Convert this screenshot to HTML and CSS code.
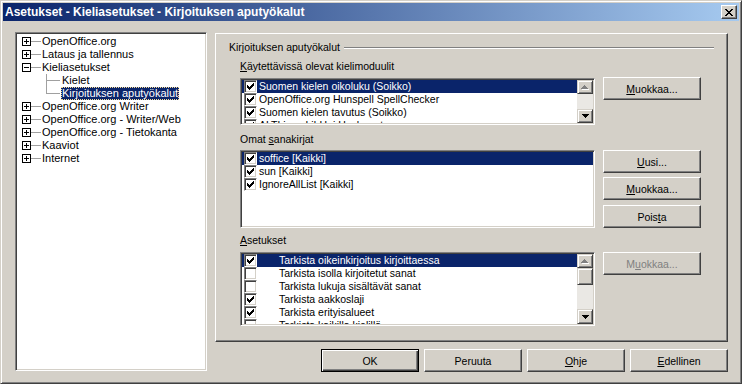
FILE: index.html
```html
<!DOCTYPE html>
<html>
<head>
    <meta charset="utf-8">
    <link rel="stylesheet" href="styles.css">
    <title>Asetukset - Kieliasetukset - Kirjoituksen aputyökalut</title>
</head>
<body>
<div class="window">
    <div class="titlebar">
        <span class="title">Asetukset - Kieliasetukset - Kirjoituksen aputyökalut</span>
        <span class="close-btn">
            <svg width="8" height="7" viewBox="0 0 8 7"><path d="M0 0h2v1h-2zM6 0h2v1h-2zM1 1h2v1h-2zM5 1h2v1h-2zM2 2h4v1h-4zM3 3h2v1h-2zM2 4h4v1h-4zM1 5h2v1h-2zM5 5h2v1h-2zM0 6h2v1h-2zM6 6h2v1h-2z"/></svg>
        </span>
    </div>

    <div class="dialog">
        <!-- options tree -->
        <div class="tree">
            <div class="node"><svg class="exp" width="9" height="9"><path d="M0.5 0.5h8v8h-8z" fill="#fff" stroke="#000"/><path d="M2 4.5h5M4.5 2v5" stroke="#000"/></svg><span class="stem"></span><span class="label">OpenOffice.org</span></div>
            <div class="node"><svg class="exp" width="9" height="9"><path d="M0.5 0.5h8v8h-8z" fill="#fff" stroke="#000"/><path d="M2 4.5h5M4.5 2v5" stroke="#000"/></svg><span class="stem"></span><span class="label">Lataus ja tallennus</span></div>
            <div class="node"><svg class="exp" width="9" height="9"><path d="M0.5 0.5h8v8h-8z" fill="#fff" stroke="#000"/><path d="M2 4.5h5" stroke="#000"/></svg><span class="stem"></span><span class="label">Kieliasetukset</span></div>
            <div class="kids">
                <div class="leaf"><span class="label">Kielet</span></div>
                <div class="leaf"><span class="label selected">Kirjoituksen aputyökalut</span></div>
            </div>
            <div class="node"><svg class="exp" width="9" height="9"><path d="M0.5 0.5h8v8h-8z" fill="#fff" stroke="#000"/><path d="M2 4.5h5M4.5 2v5" stroke="#000"/></svg><span class="stem"></span><span class="label">OpenOffice.org Writer</span></div>
            <div class="node"><svg class="exp" width="9" height="9"><path d="M0.5 0.5h8v8h-8z" fill="#fff" stroke="#000"/><path d="M2 4.5h5M4.5 2v5" stroke="#000"/></svg><span class="stem"></span><span class="label">OpenOffice.org - Writer/Web</span></div>
            <div class="node"><svg class="exp" width="9" height="9"><path d="M0.5 0.5h8v8h-8z" fill="#fff" stroke="#000"/><path d="M2 4.5h5M4.5 2v5" stroke="#000"/></svg><span class="stem"></span><span class="label">OpenOffice.org - Tietokanta</span></div>
            <div class="node"><svg class="exp" width="9" height="9"><path d="M0.5 0.5h8v8h-8z" fill="#fff" stroke="#000"/><path d="M2 4.5h5M4.5 2v5" stroke="#000"/></svg><span class="stem"></span><span class="label">Kaaviot</span></div>
            <div class="node"><svg class="exp" width="9" height="9"><path d="M0.5 0.5h8v8h-8z" fill="#fff" stroke="#000"/><path d="M2 4.5h5M4.5 2v5" stroke="#000"/></svg><span class="stem"></span><span class="label">Internet</span></div>
        </div>

        <div class="main">
            <div class="page">
                <div class="group-title"><span>Kirjoituksen aputyökalut</span><span class="etched"></span></div>

                <div class="field-label"><u>K</u>äytettävissä olevat kielimoduulit</div>
                <div class="field-row row-modules">
                    <div class="listbox lb-modules">
                        <div class="rows">
                            <div class="row selected"><span class="check"><svg width="7" height="7"><path d="M6 0h1v1h-1zM5 1h2v1h-2zM0 2h1v1h-1zM4 2h3v1h-3zM0 3h2v1h-2zM3 3h3v1h-3zM0 4h5v1h-5zM1 5h3v1h-3zM2 6h1v1h-1z"/></svg></span><span class="text">Suomen kielen oikoluku (Soikko)</span></div>
                            <div class="row"><span class="check"><svg width="7" height="7"><path d="M6 0h1v1h-1zM5 1h2v1h-2zM0 2h1v1h-1zM4 2h3v1h-3zM0 3h2v1h-2zM3 3h3v1h-3zM0 4h5v1h-5zM1 5h3v1h-3zM2 6h1v1h-1z"/></svg></span><span class="text">OpenOffice.org Hunspell SpellChecker</span></div>
                            <div class="row"><span class="check"><svg width="7" height="7"><path d="M6 0h1v1h-1zM5 1h2v1h-2zM0 2h1v1h-1zM4 2h3v1h-3zM0 3h2v1h-2zM3 3h3v1h-3zM0 4h5v1h-5zM1 5h3v1h-3zM2 6h1v1h-1z"/></svg></span><span class="text">Suomen kielen tavutus (Soikko)</span></div>
                            <div class="row"><span class="check"><svg width="7" height="7"><path d="M6 0h1v1h-1zM5 1h2v1h-2zM0 2h1v1h-1zM4 2h3v1h-3zM0 3h2v1h-2zM3 3h3v1h-3zM0 4h5v1h-5zM1 5h3v1h-3zM2 6h1v1h-1z"/></svg></span><span class="text">ALTLinux LibHnj Hyphenator</span></div>
                        </div>
                        <div class="scrollbar">
                            <div class="sb-btn"><svg width="8" height="5"><path fill="#fff" d="M4 1h1v1h-1zM3 2h3v1h-3zM2 3h5v1h-5zM1 4h7v1h-7z"/><path fill="#808080" d="M3 0h1v1h-1zM2 1h3v1h-3zM1 2h5v1h-5zM0 3h7v1h-7z"/></svg></div>
                            <div class="sb-track"></div>
                            <div class="sb-btn"><svg width="7" height="4"><path d="M0 0h7v1h-7zM1 1h5v1h-5zM2 2h3v1h-3zM3 3h1v1h-1z"/></svg></div>
                        </div>
                    </div>
                    <div class="side-buttons">
                        <button class="btn" type="button"><u>M</u>uokkaa...</button>
                    </div>
                </div>

                <div class="field-label label-dicts">Omat <u>s</u>anakirjat</div>
                <div class="field-row row-dicts">
                    <div class="listbox lb-dicts">
                        <div class="rows">
                            <div class="row selected"><span class="check"><svg width="7" height="7"><path d="M6 0h1v1h-1zM5 1h2v1h-2zM0 2h1v1h-1zM4 2h3v1h-3zM0 3h2v1h-2zM3 3h3v1h-3zM0 4h5v1h-5zM1 5h3v1h-3zM2 6h1v1h-1z"/></svg></span><span class="text">soffice [Kaikki]</span></div>
                            <div class="row"><span class="check"><svg width="7" height="7"><path d="M6 0h1v1h-1zM5 1h2v1h-2zM0 2h1v1h-1zM4 2h3v1h-3zM0 3h2v1h-2zM3 3h3v1h-3zM0 4h5v1h-5zM1 5h3v1h-3zM2 6h1v1h-1z"/></svg></span><span class="text">sun [Kaikki]</span></div>
                            <div class="row"><span class="check"><svg width="7" height="7"><path d="M6 0h1v1h-1zM5 1h2v1h-2zM0 2h1v1h-1zM4 2h3v1h-3zM0 3h2v1h-2zM3 3h3v1h-3zM0 4h5v1h-5zM1 5h3v1h-3zM2 6h1v1h-1z"/></svg></span><span class="text">IgnoreAllList [Kaikki]</span></div>
                        </div>
                    </div>
                    <div class="side-buttons">
                        <button class="btn" type="button"><u>U</u>usi...</button>
                        <button class="btn btn-gap4" type="button"><u>M</u>uokkaa...</button>
                        <button class="btn btn-gap5" type="button">Pois<u>t</u>a</button>
                    </div>
                </div>

                <div class="field-label label-options"><u>A</u>setukset</div>
                <div class="field-row row-options">
                    <div class="listbox lb-options">
                        <div class="rows">
                            <div class="row selected"><span class="check"><svg width="7" height="7"><path d="M6 0h1v1h-1zM5 1h2v1h-2zM0 2h1v1h-1zM4 2h3v1h-3zM0 3h2v1h-2zM3 3h3v1h-3zM0 4h5v1h-5zM1 5h3v1h-3zM2 6h1v1h-1z"/></svg></span><span class="text">Tarkista oikeinkirjoitus kirjoittaessa</span></div>
                            <div class="row"><span class="check"></span><span class="text">Tarkista isolla kirjoitetut sanat</span></div>
                            <div class="row"><span class="check"></span><span class="text">Tarkista lukuja sisältävät sanat</span></div>
                            <div class="row"><span class="check"><svg width="7" height="7"><path d="M6 0h1v1h-1zM5 1h2v1h-2zM0 2h1v1h-1zM4 2h3v1h-3zM0 3h2v1h-2zM3 3h3v1h-3zM0 4h5v1h-5zM1 5h3v1h-3zM2 6h1v1h-1z"/></svg></span><span class="text">Tarkista aakkoslaji</span></div>
                            <div class="row"><span class="check"><svg width="7" height="7"><path d="M6 0h1v1h-1zM5 1h2v1h-2zM0 2h1v1h-1zM4 2h3v1h-3zM0 3h2v1h-2zM3 3h3v1h-3zM0 4h5v1h-5zM1 5h3v1h-3zM2 6h1v1h-1z"/></svg></span><span class="text">Tarkista erityisalueet</span></div>
                            <div class="row"><span class="check"></span><span class="text">Tarkista kaikilla kielillä</span></div>
                        </div>
                        <div class="scrollbar">
                            <div class="sb-btn"><svg width="8" height="5"><path fill="#fff" d="M4 1h1v1h-1zM3 2h3v1h-3zM2 3h5v1h-5zM1 4h7v1h-7z"/><path fill="#808080" d="M3 0h1v1h-1zM2 1h3v1h-3zM1 2h5v1h-5zM0 3h7v1h-7z"/></svg></div>
                            <div class="sb-thumb"></div>
                            <div class="sb-track"></div>
                            <div class="sb-btn sb-down"><svg width="7" height="4"><path d="M0 0h7v1h-7zM1 1h5v1h-5zM2 2h3v1h-3zM3 3h1v1h-1z"/></svg></div>
                        </div>
                    </div>
                    <div class="side-buttons">
                        <button class="btn" type="button" disabled>M<u>u</u>okkaa...</button>
                    </div>
                </div>
            </div>

            <div class="actions">
                <button class="btn btn-default" type="button">OK</button>
                <button class="btn" type="button">Peruuta</button>
                <button class="btn" type="button"><u>O</u>hje</button>
                <button class="btn" type="button"><u>E</u>dellinen</button>
            </div>
        </div>
    </div>
</div>
</body>
</html>
```

FILE: styles.css
```css
body {
    margin: 0;
    background: #d4d0c8;
    font-family: "Liberation Sans", Arial, sans-serif;
    font-size: 10.5px;
    color: #000;
}

u {
    text-decoration-thickness: 1px;
}

.window {
    width: 742px;
    height: 384px;
    box-sizing: border-box;
    border: 1px solid;
    border-color: #d4d0c8 #404040 #404040 #d4d0c8;
    box-shadow: inset 1px 1px #fff, inset -1px -1px #808080;
    padding: 2px;
    display: flex;
    flex-direction: column;
}

/* title bar */
.titlebar {
    height: 18px;
    display: flex;
    align-items: center;
    justify-content: space-between;
    padding: 0 2px;
    background: linear-gradient(to right, #0a246a, #a6caf0);
}

.title {
    color: #fff;
    font-weight: bold;
    font-size: 12px;
    white-space: nowrap;
}

.close-btn {
    width: 16px;
    height: 14px;
    box-sizing: border-box;
    display: flex;
    align-items: center;
    justify-content: center;
    background: #d4d0c8;
    border: 1px solid;
    border-color: #fff #404040 #404040 #fff;
    box-shadow: inset -1px -1px #808080;
}

.dialog {
    display: flex;
    align-items: flex-start;
    padding: 11px 11px 0 12px;
}

/* tree */
.tree {
    width: 192px;
    height: 339px;
    flex: none;
    box-sizing: border-box;
    background: #fff;
    border: 1px solid;
    border-color: #808080 #fff #fff #808080;
    box-shadow: inset 1px 1px #404040, inset -1px -1px #d4d0c8;
    padding: 2px 1px 1px 1px;
    font-size: 11px;
}

.node {
    display: flex;
    align-items: center;
    height: 13px;
    padding-left: 5px;
}

.exp {
    flex: none;
    shape-rendering: crispEdges;
}

.stem {
    width: 10px;
    height: 1px;
    background: #a0a0a0;
    flex: none;
}

.label {
    padding: 0 1px;
    line-height: 13px;
    white-space: nowrap;
}

.label.selected {
    background: #0a246a;
    color: #fff;
    outline: 1px dotted #f5db95;
    outline-offset: -1px;
}

.kids {
    margin-left: 29px;
}

.leaf {
    display: flex;
    align-items: center;
    height: 13px;
    padding-left: 15px;
    background:
        linear-gradient(#a0a0a0, #a0a0a0) 0 0 / 1px 100% no-repeat,
        linear-gradient(#a0a0a0, #a0a0a0) 1px 6px / 13px 1px no-repeat;
}

.leaf:last-child {
    background:
        linear-gradient(#a0a0a0, #a0a0a0) 0 0 / 1px 7px no-repeat,
        linear-gradient(#a0a0a0, #a0a0a0) 1px 6px / 13px 1px no-repeat;
}

/* right side */
.main {
    width: 513px;
    margin-left: 8px;
    padding-top: 1px;
    display: flex;
    flex-direction: column;
}

.page {
    height: 309px;
    box-sizing: border-box;
    border: 1px solid;
    border-color: #fff #404040 #404040 #fff;
    box-shadow: inset -1px -1px #808080;
    padding-top: 7px;
}

.group-title {
    display: flex;
    height: 13px;
    line-height: 13px;
    margin: 0 13px;
    white-space: nowrap;
}

.etched {
    flex: 1;
    height: 0;
    border-top: 1px solid #808080;
    border-bottom: 1px solid #fff;
    margin: 6px 0 0 4px;
}

.field-label {
    height: 13px;
    line-height: 13px;
    margin: 6px 0 0 24px;
}

.label-dicts {
    margin-top: 8px;
}

.label-options {
    margin-top: 6px;
}

.field-row {
    display: flex;
    align-items: flex-start;
    margin-left: 24px;
}

.row-modules { margin-top: 5px; }
.row-dicts { margin-top: 4px; }
.row-options { margin-top: 5px; }

.listbox {
    width: 355px;
    box-sizing: border-box;
    display: flex;
    background: #fff;
    border: 1px solid;
    border-color: #808080 #fff #fff #808080;
    box-shadow: inset 1px 1px #404040, inset -1px -1px #d4d0c8;
    padding: 1px;
    overflow: hidden;
}

.lb-modules { height: 47px; }
.lb-dicts { height: 78px; }
.lb-options { height: 74px; }

.rows {
    flex: 1;
    overflow: hidden;
}

.row {
    display: flex;
    align-items: center;
    height: 13px;
    line-height: 13px;
    white-space: nowrap;
}

.row.selected {
    background: #0a246a;
    color: #fff;
}

.check {
    width: 13px;
    height: 13px;
    flex: none;
    box-sizing: border-box;
    display: flex;
    align-items: center;
    justify-content: center;
    margin-left: 2px;
    background: #fff;
    border: 1px solid;
    border-color: #808080 #fff #fff #808080;
    box-shadow: inset 1px 1px #404040, inset -1px -1px #d4d0c8;
}

.check svg {
    fill: #000;
}

.row .text {
    margin-left: 2px;
}

.lb-options .row .text {
    margin-left: 22px;
}

.scrollbar {
    width: 16px;
    flex: none;
    display: flex;
    flex-direction: column;
    background: #eae8e4;
}

.sb-btn,
.sb-thumb {
    box-sizing: border-box;
    background: #d4d0c8;
    border: 1px solid;
    border-color: #d4d0c8 #404040 #404040 #d4d0c8;
    box-shadow: inset 1px 1px #fff, inset -1px -1px #808080;
}

.sb-btn {
    height: 14px;
    display: flex;
    align-items: center;
    justify-content: center;
}

.sb-down {
    height: 15px;
}

.sb-thumb {
    height: 17px;
}

.sb-track {
    flex: 1;
}

.side-buttons {
    display: flex;
    flex-direction: column;
    margin-left: 8px;
}

.row-modules .side-buttons {
    margin-top: -1px;
}

.btn {
    width: 98px;
    height: 23px;
    box-sizing: border-box;
    padding: 0;
    font: inherit;
    color: #000;
    background: #d4d0c8;
    border: 1px solid;
    border-color: #fff #404040 #404040 #fff;
    box-shadow: inset -1px -1px #808080;
    flex: none;
}

.btn:disabled {
    color: #808080;
}

.btn-gap4 { margin-top: 4px; }
.btn-gap5 { margin-top: 5px; }

.btn-default {
    border-color: #000;
    box-shadow: inset 1px 1px #fff, inset -1px -1px #404040, inset -2px -2px #808080;
}

.actions {
    display: flex;
    justify-content: flex-end;
    gap: 5px;
    margin-top: 7px;
}
```
